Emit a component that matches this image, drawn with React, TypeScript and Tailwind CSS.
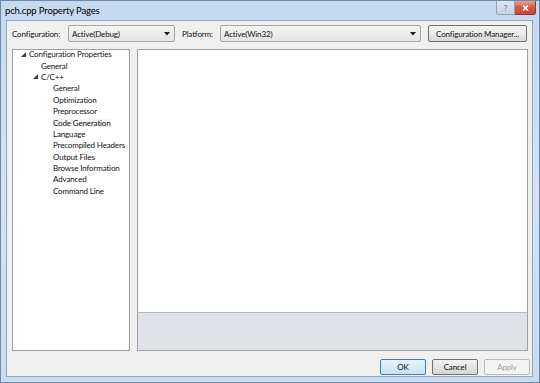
import React from "react";

const treeItems: { label: string; level: number; expanded?: boolean; selected?: boolean }[] = [
  { label: "Configuration Properties", level: 0, expanded: true },
  { label: "General", level: 1 },
  { label: "C/C++", level: 1, expanded: true },
  { label: "General", level: 2 },
  { label: "Optimization", level: 2 },
  { label: "Preprocessor", level: 2 },
  { label: "Code Generation", level: 2, selected: true },
  { label: "Language", level: 2 },
  { label: "Precompiled Headers", level: 2 },
  { label: "Output Files", level: 2 },
  { label: "Browse Information", level: 2 },
  { label: "Advanced", level: 2 },
  { label: "Command Line", level: 2 },
];

function ComboBox({ value, width }: { value: string; width: string }) {
  return (
    <div
      className={`${width} h-[17px] flex items-center justify-between border border-[#a5a5a5] rounded-[2px] bg-gradient-to-b from-[#f4f4f4] to-[#e4e4e4] pl-[3px] pr-[4px]`}
    >
      <span>{value}</span>
      <svg width="6" height="4" viewBox="0 0 6 4">
        <path d="M0 0 L6 0 L3 3.5 Z" fill="#1a1a1a" />
      </svg>
    </div>
  );
}

function Expander() {
  return (
    <svg width="5" height="5" viewBox="0 0 5 5" className="mr-[3px]">
      <path d="M5 0 L5 5 L0 5 Z" fill="#3a3a3a" />
    </svg>
  );
}

function DialogButton({ label, variant }: { label: string; variant?: "default" | "disabled" }) {
  const border =
    variant === "default"
      ? "border-[#3c7fb1] from-[#e9f4fb] to-[#c7e2f4]"
      : variant === "disabled"
        ? "border-[#b9bcbf] from-[#f4f4f4] to-[#f4f4f4] text-[#a0a0a0]"
        : "border-[#707070] from-[#f3f3f3] to-[#d5d5d5]";
  return (
    <div
      className={`w-[46px] h-[16px] flex items-center justify-center border rounded-[2px] bg-gradient-to-b ${border}`}
    >
      {label}
    </div>
  );
}

export default function App() {
  return (
    <div
      className="w-[540px] h-[383px] flex flex-col bg-gradient-to-b from-[#c4d8ee] via-[#d5e3f2] to-[#c9dbee] border border-[#6c8aa9] text-[#111] text-[8px] tracking-[-0.15px] leading-none whitespace-nowrap"
      style={{ fontFamily: "Lato, 'Open Sans', sans-serif" }}
    >
      {/* title bar */}
      <div className="h-[19px] flex items-start justify-between pl-[4px] pr-[3px]">
        <span className="mt-[5px] text-[9.5px] text-black">pch.cpp Property Pages</span>
        <div className="flex">
          <div className="w-[19px] h-[14px] border border-[#8da4bd] border-t-0 rounded-bl-[3px] bg-gradient-to-b from-[#dbe6f3] to-[#c3d3e6] flex items-center justify-center text-[8px] text-[#5a6d85]">
            ?
          </div>
          <div className="w-[21px] h-[14px] border border-[#8a3a3a] border-t-0 border-l-0 rounded-br-[3px] bg-gradient-to-b from-[#e5a193] via-[#d4583f] to-[#c84a30] flex items-center justify-center">
            <svg width="7" height="6" viewBox="0 0 7 6">
              <path d="M1 0.5 L6 5.5 M6 0.5 L1 5.5" stroke="white" strokeWidth="1.6" />
            </svg>
          </div>
        </div>
      </div>

      {/* client area */}
      <div className="flex-1 ml-[5px] mr-[6px] mb-[5px] bg-[#f0f0f0] border border-[#8ea6c0] flex flex-col">
        <div className="flex items-center pt-[4px] pl-[5px] pr-[4px]">
          <span className="w-[56px]">Configuration:</span>
          <ComboBox value="Active(Debug)" width="w-[107px]" />
          <span className="ml-[7px] w-[38px]">Platform:</span>
          <ComboBox value="Active(Win32)" width="w-[201px]" />
          <div className="ml-[7px] w-[99px] h-[17px] flex items-center justify-center border border-[#707070] rounded-[2px] bg-gradient-to-b from-[#f3f3f3] via-[#ebebeb] to-[#d6d6d6]">
            Configuration Manager...
          </div>
        </div>

        <div className="flex mt-[7px] pl-[5px] pr-[4px] gap-[7px]">
          <div className="w-[118px] h-[302px] bg-white border border-[#a0a0a0]">
            <div className="-mt-[1.5px]">
              {treeItems.map((item, i) => (
                <div
                  key={i}
                  className="h-[11.4px] flex items-center"
                  style={{ paddingLeft: 16 + item.level * 12 - (item.expanded ? 8 : 0) }}
                >
                  {item.expanded && <Expander />}
                  <span className={item.selected ? "bg-[#f3f3f3]" : ""}>{item.label}</span>
                </div>
              ))}
            </div>
          </div>
          <div className="flex-1 h-[302px] border border-[#a0a0a0] flex flex-col">
            <div className="flex-1 bg-white" />
            <div className="h-[38px] bg-[#dfe2e6] border-t border-[#b4b8bc]" />
          </div>
        </div>

        <div className="flex justify-end gap-[6px] mt-[8px] pr-[2px]">
          <DialogButton label="OK" variant="default" />
          <DialogButton label="Cancel" />
          <DialogButton label="Apply" variant="disabled" />
        </div>
      </div>
    </div>
  );
}
